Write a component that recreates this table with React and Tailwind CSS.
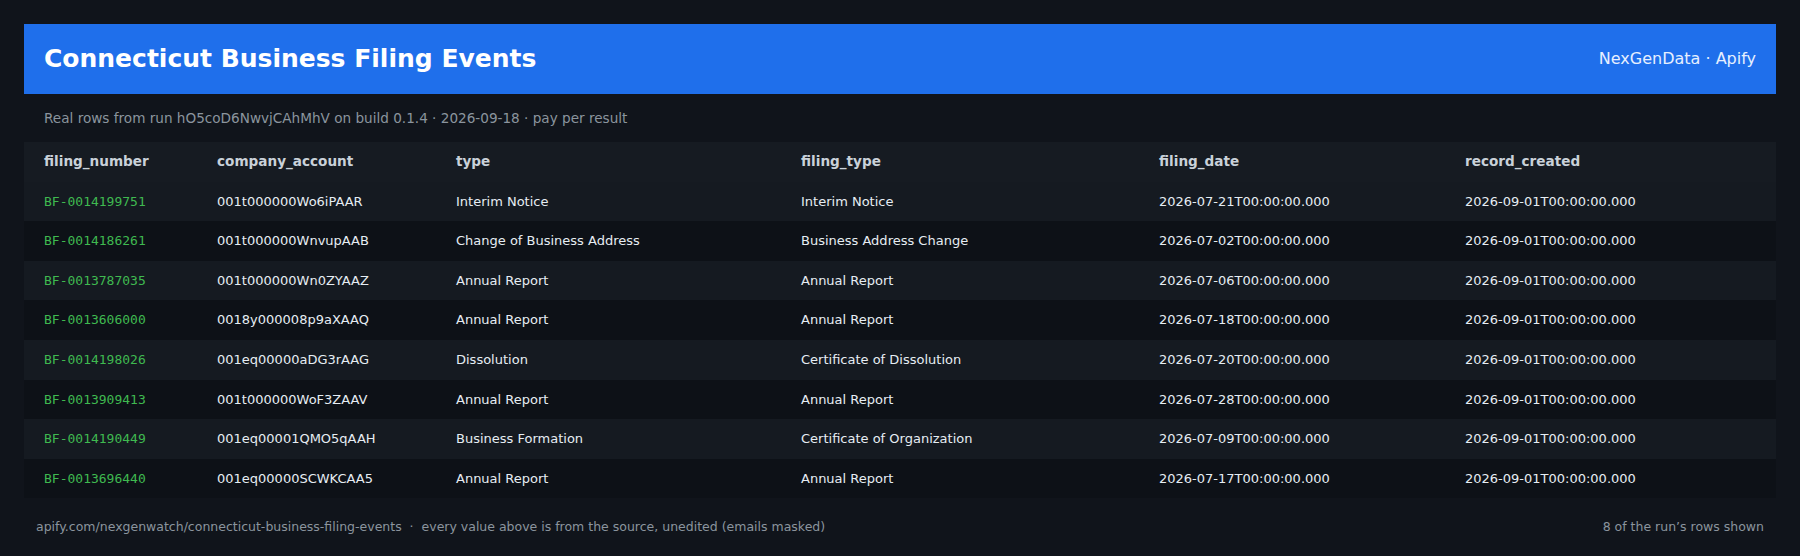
const rows = [
  ["BF-0014199751", "001t000000Wo6iPAAR", "Interim Notice", "Interim Notice", "2026-07-21T00:00:00.000", "2026-09-01T00:00:00.000"],
  ["BF-0014186261", "001t000000WnvupAAB", "Change of Business Address", "Business Address Change", "2026-07-02T00:00:00.000", "2026-09-01T00:00:00.000"],
  ["BF-0013787035", "001t000000Wn0ZYAAZ", "Annual Report", "Annual Report", "2026-07-06T00:00:00.000", "2026-09-01T00:00:00.000"],
  ["BF-0013606000", "0018y000008p9aXAAQ", "Annual Report", "Annual Report", "2026-07-18T00:00:00.000", "2026-09-01T00:00:00.000"],
  ["BF-0014198026", "001eq00000aDG3rAAG", "Dissolution", "Certificate of Dissolution", "2026-07-20T00:00:00.000", "2026-09-01T00:00:00.000"],
  ["BF-0013909413", "001t000000WoF3ZAAV", "Annual Report", "Annual Report", "2026-07-28T00:00:00.000", "2026-09-01T00:00:00.000"],
  ["BF-0014190449", "001eq00001QMO5qAAH", "Business Formation", "Certificate of Organization", "2026-07-09T00:00:00.000", "2026-09-01T00:00:00.000"],
  ["BF-0013696440", "001eq00000SCWKCAA5", "Annual Report", "Annual Report", "2026-07-17T00:00:00.000", "2026-09-01T00:00:00.000"],
];

const columns = [
  { key: "filing_number", width: "w-[173px]" },
  { key: "company_account", width: "w-[239px]" },
  { key: "type", width: "w-[345px]" },
  { key: "filing_type", width: "w-[358px]" },
  { key: "filing_date", width: "w-[306px]" },
  { key: "record_created", width: "w-[331px]" },
];

const cell = "px-5 py-3 text-left leading-[15.6px] whitespace-nowrap";

export default function App() {
  return (
    <div
      className="min-h-[556px] w-full bg-[#10141b] px-6 pt-6"
      style={{ fontFamily: '"DejaVu Sans", "Liberation Sans", sans-serif' }}
    >
      {/* Header */}
      <header className="flex h-[70px] items-center justify-between bg-[#1f6feb] px-5">
        <h1 className="text-[25px] font-bold text-white">
          Connecticut Business Filing Events
        </h1>
        <span className="text-[16px] text-[#e6efff]">NexGenData · Apify</span>
      </header>

      <p className="flex h-[48px] items-center px-5 text-[13.6px] text-[#8b949e]">
        Real rows from run hO5coD6NwvjCAhMhV on build 0.1.4 · 2026-09-18 · pay per result
      </p>

      {/* Table */}
      <table className="w-full table-fixed border-collapse">
        <thead>
          <tr className="bg-[#161b22]">
            {columns.map((c) => (
              <th key={c.key} className={`${cell} ${c.width} text-[13.6px] font-bold text-[#c9d1d9]`}>
                {c.key}
              </th>
            ))}
          </tr>
        </thead>
        <tbody>
          {rows.map((r, i) => (
            <tr key={r[0]} className={i % 2 === 0 ? "bg-[#151a21]" : "bg-[#0d1117]"}>
              <td
                className={`${cell} text-[13px] text-[#3fb950]`}
                style={{ fontFamily: '"DejaVu Sans Mono", "Liberation Mono", monospace' }}
              >
                {r[0]}
              </td>
              {r.slice(1).map((v, j) => (
                <td key={j} className={`${cell} text-[13px] text-[#e6edf3]`}>
                  {v}
                </td>
              ))}
            </tr>
          ))}
        </tbody>
      </table>

      {/* Footer */}
      <footer className="flex h-[58px] items-center justify-between px-3 text-[12.5px] text-[#8b949e]">
        <span>
          apify.com/nexgenwatch/connecticut-business-filing-events&nbsp; · &nbsp;every value above is from the source, unedited (emails masked)
        </span>
        <span>8 of the run’s rows shown</span>
      </footer>
    </div>
  );
}
